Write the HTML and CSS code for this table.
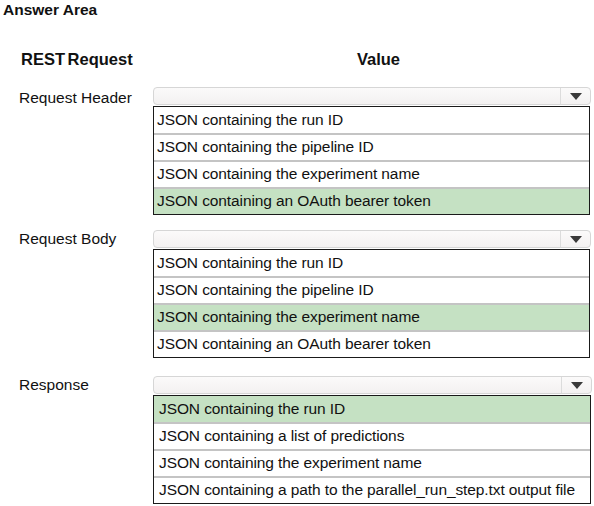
FILE: index.html
```html
<!DOCTYPE html>
<html>
<head>
<meta charset="utf-8">
<link rel="stylesheet" href="styles.css">
</head>
<body>
<div class="page">
  <div class="title">Answer Area</div>
  <div class="head">
    <div class="hlabel">REST Request</div>
    <div class="hvalue">Value</div>
  </div>

  <div class="row r1">
    <div class="label">Request Header</div>
    <div class="value">
      <div class="select"><span class="arrow"><svg width="12" height="7" viewBox="0 0 12 7"><path d="M0 0H12L6 7Z" fill="#3a3a3a"/></svg></span></div>
      <div class="list">
        <div class="opt">JSON containing the run ID</div>
        <div class="opt">JSON containing the pipeline ID</div>
        <div class="opt">JSON containing the experiment name</div>
        <div class="opt sel">JSON containing an OAuth bearer token</div>
      </div>
    </div>
  </div>

  <div class="row r2">
    <div class="label">Request Body</div>
    <div class="value">
      <div class="select"><span class="arrow"><svg width="12" height="7" viewBox="0 0 12 7"><path d="M0 0H12L6 7Z" fill="#3a3a3a"/></svg></span></div>
      <div class="list">
        <div class="opt">JSON containing the run ID</div>
        <div class="opt">JSON containing the pipeline ID</div>
        <div class="opt sel">JSON containing the experiment name</div>
        <div class="opt">JSON containing an OAuth bearer token</div>
      </div>
    </div>
  </div>

  <div class="row r3">
    <div class="label">Response</div>
    <div class="value wide">
      <div class="select"><span class="arrow"><svg width="12" height="7" viewBox="0 0 12 7"><path d="M0 0H12L6 7Z" fill="#3a3a3a"/></svg></span></div>
      <div class="list">
        <div class="opt sel">JSON containing the run ID</div>
        <div class="opt">JSON containing a list of predictions</div>
        <div class="opt">JSON containing the experiment name</div>
        <div class="opt">JSON containing a path to the parallel_run_step.txt output file</div>
      </div>
    </div>
  </div>
</div>
</body>
</html>
```

FILE: styles.css
```css
html, body {
  margin: 0;
  padding: 0;
  background: #ffffff;
}
body {
  font-family: "Liberation Sans", Arial, sans-serif;
  color: #111;
  width: 594px;
  height: 506px;
  overflow: hidden;
}
.page {
  display: flex;
  flex-direction: column;
}
.title {
  font-weight: bold;
  font-size: 15.5px;
  padding: 1px 0 0 3px;
  height: 21px;
}
.head {
  display: flex;
  margin-top: 28px;
  font-weight: bold;
  font-size: 16.5px;
  height: 18px;
  align-items: center;
}
.hlabel {
  width: 153px;
  padding-left: 21px;
  box-sizing: border-box;
  word-spacing: -2px;
}
.hvalue {
  width: 437px;
  text-align: center;
  padding-left: 14px;
  box-sizing: border-box;
}
.row {
  display: flex;
  align-items: flex-start;
}
.r1 { margin-top: 19px; }
.r2 { margin-top: 15px; }
.r3 { margin-top: 18px; }
.label {
  width: 153px;
  padding-left: 19px;
  box-sizing: border-box;
  font-size: 15.5px;
  line-height: 18px;
  padding-top: 2px;
}
.r2 .label,
.r3 .label {
  padding-top: 0;
}
.value {
  width: 437px;
  display: flex;
  flex-direction: column;
}
.value.wide { width: 438px; }
.select {
  height: 18px;
  box-sizing: border-box;
  border: 1px solid #d6d6d6;
  border-radius: 4px;
  background: linear-gradient(#fbfafa, #f3f1f1);
  display: flex;
  justify-content: flex-end;
  margin-right: -1px;
}
.arrow {
  width: 29px;
  border-left: 1px solid #dcdcdc;
  display: flex;
  align-items: center;
  justify-content: center;
}
.list {
  margin-top: 1px;
  border: 1px solid #1a1a1a;
  display: flex;
  flex-direction: column;
}
.opt {
  height: 27px;
  box-sizing: border-box;
  font-size: 15.5px;
  letter-spacing: -0.1px;
  line-height: 24px;
  padding-left: 3px;
  border-top: 2px solid #c4c4c4;
  white-space: nowrap;
}
.opt:first-child {
  border-top: none;
  height: 26px;
  line-height: 25px;
}
.opt.sel {
  background: #c5e1c3;
}
.r3 .opt { padding-left: 5px; }
```
